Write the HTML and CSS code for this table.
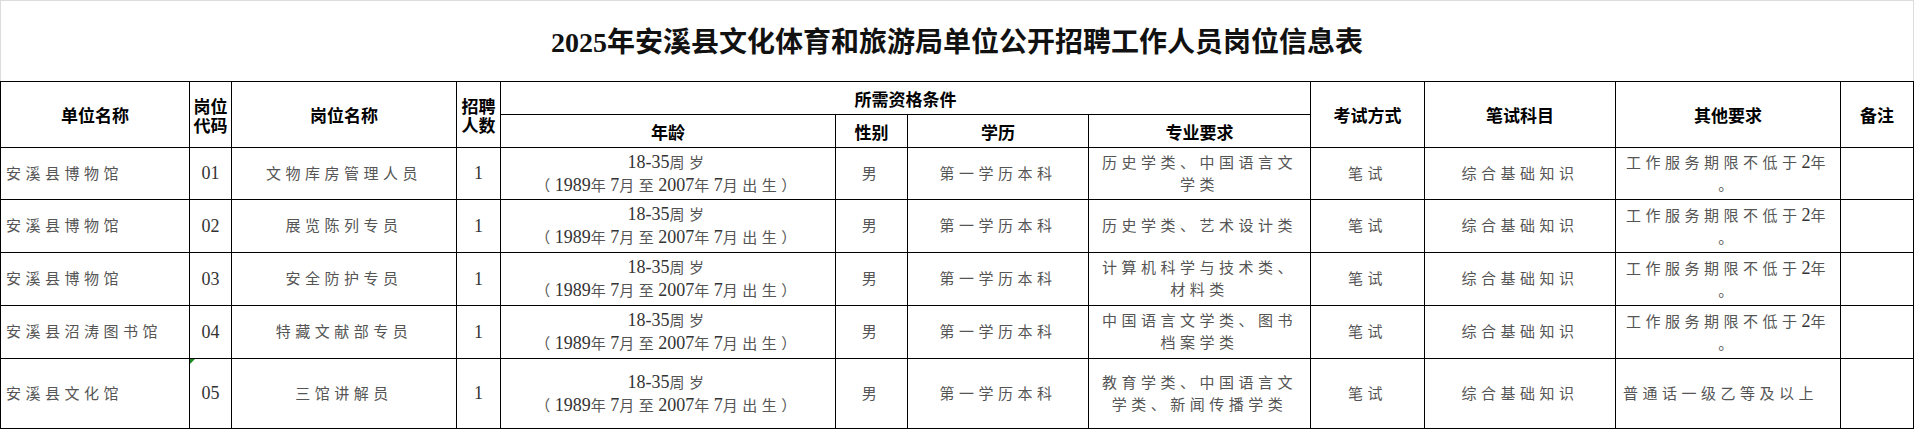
FILE: index.html
```html
<!DOCTYPE html>
<html lang="zh-CN">
<head>
<meta charset="utf-8">
<title>2025年安溪县文化体育和旅游局单位公开招聘工作人员岗位信息表</title>
<link rel="stylesheet" href="styles.css">
</head>
<body>
<div class="sheet">
  <div class="title-box">
    <h1 class="title">2025年安溪县文化体育和旅游局单位公开招聘工作人员岗位信息表</h1>
  </div>
  <table class="grid">
    <colgroup>
      <col class="w189"><col class="w42"><col class="w225"><col class="w44"><col class="w335"><col class="w72">
      <col class="w181"><col class="w222"><col class="w114"><col class="w191"><col class="w225"><col class="w73">
    </colgroup>
    <thead>
      <tr class="h33">
        <th rowspan="2">单位名称</th>
        <th rowspan="2" class="stack">岗位<br>代码</th>
        <th rowspan="2">岗位名称</th>
        <th rowspan="2" class="stack">招聘<br>人数</th>
        <th colspan="4">所需资格条件</th>
        <th rowspan="2">考试方式</th>
        <th rowspan="2">笔试科目</th>
        <th rowspan="2">其他要求</th>
        <th rowspan="2">备注</th>
      </tr>
      <tr class="h33">
        <th>年龄</th>
        <th>性别</th>
        <th>学历</th>
        <th>专业要求</th>
      </tr>
    </thead>
    <tbody>
      <tr class="h52">
        <td class="left">安溪县博物馆</td>
        <td><span class="n">01</span></td>
        <td>文物库房管理人员</td>
        <td><span class="n">1</span></td>
        <td><span class="n">18-35</span>周岁<br>（<span class="n">1989</span>年<span class="n">7</span>月至<span class="n">2007</span>年<span class="n">7</span>月出生）</td>
        <td>男</td>
        <td>第一学历本科</td>
        <td>历史学类、中国语言文<br>学类</td>
        <td>笔试</td>
        <td>综合基础知识</td>
        <td>工作服务期限不低于<span class="n">2</span>年<br>。</td>
        <td></td>
      </tr>
      <tr class="h53">
        <td class="left">安溪县博物馆</td>
        <td><span class="n">02</span></td>
        <td>展览陈列专员</td>
        <td><span class="n">1</span></td>
        <td><span class="n">18-35</span>周岁<br>（<span class="n">1989</span>年<span class="n">7</span>月至<span class="n">2007</span>年<span class="n">7</span>月出生）</td>
        <td>男</td>
        <td>第一学历本科</td>
        <td>历史学类、艺术设计类</td>
        <td>笔试</td>
        <td>综合基础知识</td>
        <td>工作服务期限不低于<span class="n">2</span>年<br>。</td>
        <td></td>
      </tr>
      <tr class="h53">
        <td class="left">安溪县博物馆</td>
        <td><span class="n">03</span></td>
        <td>安全防护专员</td>
        <td><span class="n">1</span></td>
        <td><span class="n">18-35</span>周岁<br>（<span class="n">1989</span>年<span class="n">7</span>月至<span class="n">2007</span>年<span class="n">7</span>月出生）</td>
        <td>男</td>
        <td>第一学历本科</td>
        <td>计算机科学与技术类、<br>材料类</td>
        <td>笔试</td>
        <td>综合基础知识</td>
        <td>工作服务期限不低于<span class="n">2</span>年<br>。</td>
        <td></td>
      </tr>
      <tr class="h53">
        <td class="left">安溪县沼涛图书馆</td>
        <td><span class="n">04</span></td>
        <td>特藏文献部专员</td>
        <td><span class="n">1</span></td>
        <td><span class="n">18-35</span>周岁<br>（<span class="n">1989</span>年<span class="n">7</span>月至<span class="n">2007</span>年<span class="n">7</span>月出生）</td>
        <td>男</td>
        <td>第一学历本科</td>
        <td>中国语言文学类、图书<br>档案学类</td>
        <td>笔试</td>
        <td>综合基础知识</td>
        <td>工作服务期限不低于<span class="n">2</span>年<br>。</td>
        <td></td>
      </tr>
      <tr class="h70">
        <td class="left">安溪县文化馆</td>
        <td class="flag"><span class="n">05</span></td>
        <td>三馆讲解员</td>
        <td><span class="n">1</span></td>
        <td><span class="n">18-35</span>周岁<br>（<span class="n">1989</span>年<span class="n">7</span>月至<span class="n">2007</span>年<span class="n">7</span>月出生）</td>
        <td>男</td>
        <td>第一学历本科</td>
        <td>教育学类、中国语言文<br>学类、新闻传播学类</td>
        <td>笔试</td>
        <td>综合基础知识</td>
        <td class="left2">普通话一级乙等及以上</td>
        <td></td>
      </tr>
    </tbody>
  </table>
</div>
</body>
</html>
```

FILE: styles.css
```css
html, body {
  margin: 0;
  padding: 0;
  background: #ffffff;
}

body {
  font-family: "Liberation Serif", "Noto Sans CJK SC", serif;
  color: #000;
}

.sheet {
  width: 1914px;
}

.title-box {
  box-sizing: border-box;
  height: 81px;
  border-top: 1px solid #dcdcdc;
  border-left: 1px solid #dcdcdc;
  border-right: 1px solid #dcdcdc;
  display: flex;
  align-items: center;
  justify-content: center;
  padding-top: 4px;
}

.title {
  margin: 0;
  font-family: "Liberation Serif", "Noto Sans CJK SC", serif;
  font-size: 28px;
  font-weight: 700;
  line-height: 32px;
  color: #111;
}

.grid {
  width: 1914px;
  table-layout: fixed;
  border-collapse: collapse;
}

.w189 { width: 189px; }
.w42 { width: 42px; }
.w225 { width: 225px; }
.w44 { width: 44px; }
.w335 { width: 335px; }
.w72 { width: 72px; }
.w181 { width: 181px; }
.w222 { width: 222px; }
.w114 { width: 114px; }
.w191 { width: 191px; }
.w73 { width: 73px; }

.h33 { height: 33px; }
.h52 { height: 52px; }
.h53 { height: 53px; }
.h70 { height: 70px; }

.grid th,
.grid td {
  border: 1px solid #000;
  padding: 0;
  text-align: center;
  vertical-align: middle;
  overflow: hidden;
}

.grid th {
  font-family: "Noto Sans CJK SC", sans-serif;
  font-size: 17px;
  font-weight: 700;
  line-height: 19px;
  color: #000;
}

.grid td {
  font-family: "Liberation Serif", "Noto Sans CJK SC", serif;
  font-size: 15px;
  line-height: 22px;
  letter-spacing: 4.5px;
  color: #555;
  white-space: nowrap;
}

.grid td.left {
  text-align: left;
  padding-left: 5px;
}

.grid td.left2 {
  text-align: left;
  padding-left: 7px;
}

.n {
  font-family: "Liberation Serif", serif;
  font-size: 18px;
  letter-spacing: 0;
  color: #333;
}

.grid td.flag {
  position: relative;
}

.grid td.flag::before {
  content: "";
  position: absolute;
  top: 0;
  left: 0;
  width: 0;
  height: 0;
  border-top: 5px solid #1f8a1f;
  border-right: 5px solid transparent;
}
```
